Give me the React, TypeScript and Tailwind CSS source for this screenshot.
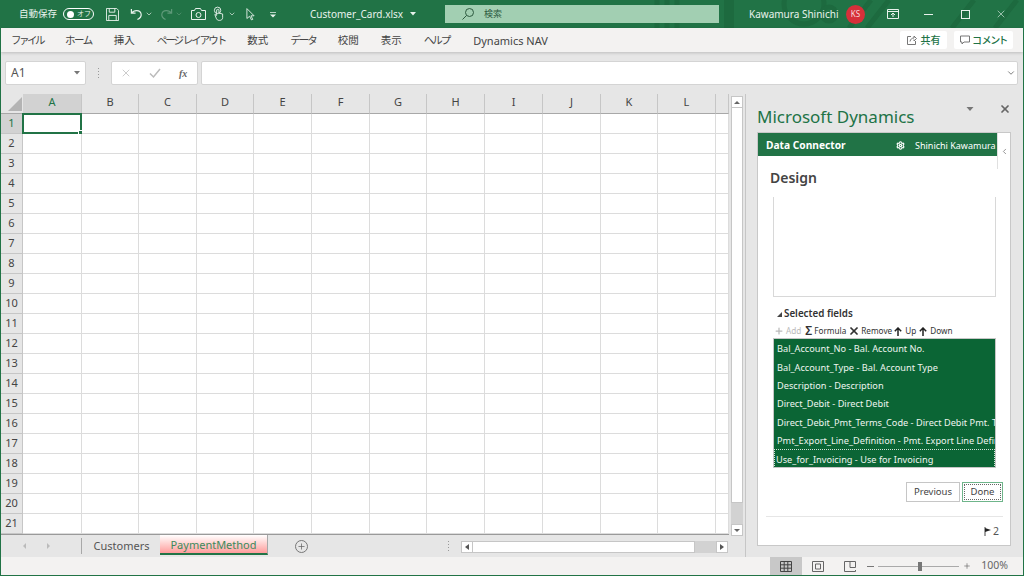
import { ChevronDown, ChevronLeft, Plus, Settings, X } from 'lucide-react';

const sansJa = "font-['Noto_Sans','Noto_Sans_CJK_JP',sans-serif]";

const ribbonTabs = [
    { label: 'ファイル', cls: 'tracking-[-2.5px]' },
    { label: 'ホーム', cls: 'tracking-[-1.5px]' },
    { label: '挿入', cls: '' },
    { label: 'ページ レイアウト', cls: 'tracking-[-2px]' },
    { label: '数式', cls: '' },
    { label: 'データ', cls: 'tracking-[-2px]' },
    { label: '校閲', cls: '' },
    { label: '表示', cls: '' },
    { label: 'ヘルプ', cls: 'tracking-[-2px]' },
    { label: 'Dynamics NAV', cls: 'ml-[2px] text-[11px]' },
];
const columns = ['A', 'B', 'C', 'D', 'E', 'F', 'G', 'H', 'I', 'J', 'K', 'L', ''];
const rows = Array.from({ length: 21 }, (_, i) => i + 1);
const fields = [
    'Bal_Account_No - Bal. Account No.',
    'Bal_Account_Type - Bal. Account Type',
    'Description - Description',
    'Direct_Debit - Direct Debit',
    'Direct_Debit_Pmt_Terms_Code - Direct Debit Pmt. Terms Code',
    'Pmt_Export_Line_Definition - Pmt. Export Line Definition',
    'Use_for_Invoicing - Use for Invoicing',
];

const gridCols = 'grid grid-cols-[22px_59px_57px_58px_57px_58px_58px_57px_58px_58px_58px_57px_58px_13px_2px]';

function TitleBar() {
    return (
        <div className="relative flex h-[28px] shrink-0 items-center overflow-hidden bg-[#217346] text-[#e8f2ec]">
            {/* circuit watermark */}
            <svg className="absolute right-0 top-0" width="384" height="28" fill="none" stroke="#1d6a3f" strokeWidth="5">
                <path d="M18 0v28M28 0v28M38 0v28" />
                <path d="M90 0v28" strokeWidth="10" />
                <circle cx="165" cy="4" r="20" />
                <circle cx="190" cy="14" r="7" />
                <path d="M232 0l-22 28M250 0l-22 28M335 0l-22 28M378 0l-22 28" />
            </svg>
            <span className="relative ml-[18px] w-[40px] text-[9.5px] whitespace-nowrap">自動保存</span>
            <div className="relative ml-[4px] flex h-[12px] w-[31px] items-center rounded-full border border-white px-[3px]">
                <span className="h-[7px] w-[7px] shrink-0 rounded-full bg-white" />
                <span className="ml-[3px] text-[7px] whitespace-nowrap">オフ</span>
            </div>
            <svg className="relative ml-[12px] shrink-0" width="13" height="13" viewBox="0 0 14 14" fill="none" stroke="#e8f2ec">
                <path d="M.5.5h11l2 2v11H.5zM3.5.5v4h6v-4M3 13.5V8h8v5.5" />
            </svg>
            <svg className="relative ml-[11px] shrink-0" width="13" height="14" viewBox="0 0 14 14" fill="none" stroke="#e8f2ec" strokeWidth="1.3">
                <path d="M1.500 1.500v4.500h4.500M2 6c2-3.500 9-4 10 1 .5 3-2 5-4 6" />
            </svg>
            <ChevronDown className="relative ml-[2px] shrink-0" size={8} />
            <svg className="relative ml-[7px] shrink-0 opacity-30" width="13" height="14" viewBox="0 0 14 14" fill="none" stroke="#e8f2ec" strokeWidth="1.3">
                <path d="M12.500 1.500v4.500H8M12 6c-2-3.500-9-4-10 1-.5 3 2 5 4 6" />
            </svg>
            <ChevronDown className="relative ml-[2px] shrink-0 opacity-30" size={8} />
            <svg className="relative ml-[8px] shrink-0" width="15" height="14" viewBox="0 0 15 14" fill="none" stroke="#e8f2ec">
                <path d="M.5 3.500h3l1-2h5l1 2h4v9H.5z" />
                <circle cx="7.500" cy="8" r="2.500" />
            </svg>
            <svg className="relative ml-[7px] shrink-0" width="11" height="16" viewBox="0 0 12 16" fill="none" stroke="#e8f2ec">
                <circle cx="5" cy="4" r="3.500" />
                <path d="M4 3.500v6l-2 -1 1.500 4c.5 1.500 1.500 2.500 3.500 2.500s3.500-1 3.500-3V8l-4-1V3.500c0-1-2-1-2 0z" />
            </svg>
            <ChevronDown className="relative ml-[4px] shrink-0" size={8} />
            <svg className="relative ml-[10px] shrink-0" width="9" height="14" viewBox="0 0 10 14" fill="none" stroke="#e8f2ec">
                <path d="M1 1l8 8H5.500l2 4-1.500.5-2-4L1 12z" />
            </svg>
            <svg className="relative ml-[15px] shrink-0" width="6" height="7" viewBox="0 0 8 8" fill="#e8f2ec">
                <path d="M0 1h8v1H0zM0 4h8L4 8z" />
            </svg>
            <span className="relative ml-[34px] w-[94px] text-[10px] whitespace-nowrap">Customer_Card.xlsx</span>
            <svg className="relative ml-[6px] shrink-0" width="6" height="4" viewBox="0 0 6 4" fill="#e8f2ec">
                <path d="M0 0h6L3 3.500z" />
            </svg>
            <div className="relative ml-[29px] flex h-[18px] w-[274px] shrink-0 items-center bg-[#a2cfb2] pl-[16px] text-[#2d5a3f]">
                <svg width="14" height="14" viewBox="0 0 14 14" fill="none" stroke="#2d5a3f">
                    <circle cx="8.500" cy="5.500" r="4" />
                    <path d="M5.500 8.500L1.500 12.500" />
                </svg>
                <span className="ml-[9px] text-[9px]">検索</span>
            </div>
            <span className="relative ml-[30px] w-[89px] text-[10px] whitespace-nowrap">Kawamura Shinichi</span>
            <div className="relative ml-[8px] flex h-[19px] w-[19px] shrink-0 items-center justify-center rounded-full bg-[#d6303a] text-[8px] text-[#f6dcdc]">
                KS
            </div>
            <svg className="relative ml-[22px] shrink-0" width="12" height="10" viewBox="0 0 12 10" fill="none" stroke="#e8f2ec">
                <path d="M.5.500h11v9H.5zM.5 2.500h11M6 8V4M4 6l2-2 2 2" />
            </svg>
            <div className="relative ml-[25px] h-px w-[9px] shrink-0 bg-[#e8f2ec]" />
            <div className="relative ml-[28px] h-[9px] w-[9px] shrink-0 border border-[#e8f2ec]" />
            <X className="relative ml-[25px] shrink-0" size={12} strokeWidth={1.2} />
        </div>
    );
}

function RibbonTabs() {
    return (
        <div className="relative z-10 flex h-[24px] shrink-0 items-center bg-[#f3f2f1] pl-[10px] pr-[10px] text-[10.5px] text-[#444] shadow-[0_1px_3px_rgba(0,0,0,0.18)]">
            <div className="mt-[2px] flex items-center gap-[22px]">
                {ribbonTabs.map((t) => (
                    <span key={t.label} className={`whitespace-nowrap ${t.cls}`}>{t.label}</span>
                ))}
            </div>
            <div className="ml-auto flex items-center gap-[7px] text-[10px] font-medium text-[#217346] [font-feature-settings:'palt']">
                <div className="flex h-[18px] w-[47px] items-center justify-center gap-[4px] rounded-[2px] bg-white">
                    <svg width="10" height="10" viewBox="0 0 10 10" fill="none" stroke="#777">
                        <path d="M4 1.500H.5v8h8V6M3 6.500C3.500 4 5 3 7 3V1l2.500 2.500L7 6V4.500" />
                    </svg>
                    共有
                </div>
                <div className="flex h-[18px] w-[59px] items-center justify-center gap-[3px] rounded-[2px] bg-white">
                    <svg width="10" height="10" viewBox="0 0 10 10" fill="none" stroke="#777">
                        <path d="M.5 1h9v6H4L2 9V7H.5z" />
                    </svg>
                    コメント
                </div>
            </div>
        </div>
    );
}

function FormulaBar() {
    return (
        <div className="flex h-[42px] shrink-0 items-start bg-[#e6e6e6] pl-[4px] pr-[5px] pt-[9px]">
            <div className="flex h-[24px] w-[81px] items-center justify-between rounded-[2px] border border-[#d4d4d4] bg-white pl-[5px] pr-[5px] text-[12px] text-[#555]">
                <span>A1</span>
                <svg width="6" height="4" viewBox="0 0 6 4" fill="#777">
                    <path d="M0 0h6L3 3.500z" />
                </svg>
            </div>
            <div className="flex h-[24px] w-[25px] flex-col items-center justify-center gap-[2px]">
                <span className="h-px w-px bg-[#999]" />
                <span className="h-px w-px bg-[#999]" />
                <span className="h-px w-px bg-[#999]" />
                <span className="h-px w-px bg-[#999]" />
            </div>
            <div className="flex h-[24px] w-[87px] items-center rounded-[2px] border border-[#d4d4d4] bg-white text-[#bbb]">
                <X className="ml-[8px]" size={12} strokeWidth={1.5} />
                <svg className="ml-[17px]" width="12" height="12" viewBox="0 0 12 12" fill="none" stroke="#bbb" strokeWidth="1.500">
                    <path d="M1 6.500l3.500 3.500L11 2" />
                </svg>
                <span className="ml-[18px] font-['Liberation_Serif',serif] text-[10px] italic font-bold text-[#666]">fx</span>
            </div>
            <div className="ml-[3px] flex h-[24px] flex-1 items-center justify-end rounded-[2px] border border-[#d4d4d4] bg-white pr-[1px] text-[#666]">
                <ChevronDown size={10} strokeWidth={2} />
            </div>
        </div>
    );
}

function Sheet() {
    return (
        <div className="flex min-h-0 flex-1 flex-col">
            <div className="flex h-[441px] shrink-0">
                <div className="w-[730px] shrink-0 bg-[#e6e6e6]">
                    <div className={`${gridCols} h-[20px] bg-[#e6e6e6] text-[11px] text-[#444]`}>
                        <div className="relative border-b border-b-[#a8a8a8]">
                            <div className="absolute bottom-[2px] right-[1px] h-0 w-0 border-b-[14px] border-l-[14px] border-b-[#b4b4b4] border-l-transparent" />
                        </div>
                        {columns.map((c, i) => (
                            <div
                                key={c + i}
                                className={`flex items-center justify-center border-b border-r border-b-[#a8a8a8] border-r-[#c6c6c6] pb-[2px] ${i === 0 ? 'bg-[#d2d2d2] text-[#217346]' : ''}`}
                            >
                                {c}
                            </div>
                        ))}
                        <div />
                    </div>
                    {rows.map((r) => (
                        <div key={r} className={`${gridCols} h-[20px] text-[11px]`}>
                            <div className={`flex items-center justify-center border-b border-r border-[#c6c6c6] ${r === 1 ? 'bg-[#d2d2d2] text-[#217346]' : 'bg-[#e6e6e6] text-[#444]'}`}>
                                {r}
                            </div>
                            {columns.map((c, i) => (
                                <div key={c + i} className="relative border-b border-r border-[#dcdcdc] bg-white">
                                    {r === 1 && i === 0 && (
                                        <div className="absolute -left-px -top-px h-[21px] w-[60px] border-2 border-[#217346]">
                                            <div className="absolute -bottom-[3px] -right-[3px] h-[5px] w-[5px] border border-white bg-[#217346]" />
                                        </div>
                                    )}
                                </div>
                            ))}
                            <div />
                        </div>
                    ))}
                    <div className="mr-[2px] h-px bg-[#9a9a9a]" />
                </div>
                <div className="flex w-[14px] shrink-0 flex-col bg-[#e6e6e6] pt-[2px]">
                    <div className="flex h-[12px] w-[12px] items-center justify-center border border-[#c6c6c6] bg-white">
                        <span className="h-0 w-0 border-x-[3px] border-b-[3px] border-x-transparent border-b-[#666]" />
                    </div>
                    <div className="h-[395px] w-[12px] border-x border-b border-[#c6c6c6] bg-white" />
                    <div className="w-[12px] flex-1 bg-[#d2d2d2]" />
                    <div className="relative mb-[-1px] flex h-[12px] w-[12px] items-center justify-center border border-[#c6c6c6] bg-white">
                        <span className="h-0 w-0 border-x-[3px] border-t-[3px] border-x-transparent border-t-[#666]" />
                    </div>
                </div>
            </div>
            <div className="flex h-[22px] shrink-0 items-start bg-[#e6e6e6] text-[11px] text-[#555]">
                <div className="mt-[3px] flex h-[16px] w-[81px] shrink-0 items-center border-r border-r-[#a8a8a8] pl-[22px]">
                    <span className="h-0 w-0 border-y-[3px] border-r-[3px] border-y-transparent border-r-[#bbb]" />
                    <span className="ml-[21px] h-0 w-0 border-y-[3px] border-l-[3px] border-y-transparent border-l-[#bbb]" />
                </div>
                <div className="flex h-[20px] w-[78px] shrink-0 items-center justify-center pl-[1px] pt-[2px]">Customers</div>
                <div className="flex h-[20px] w-[108px] shrink-0 items-center justify-center border-b-2 border-r border-b-[#217346] border-r-[#a8a8a8] bg-gradient-to-b from-white to-[#ff9c9c] pt-[2px] text-[#3d8a5c]">
                    PaymentMethod
                </div>
                <div className="ml-[27px] mt-[5px] flex h-[13px] w-[13px] items-center justify-center rounded-full border border-[#777] text-[#666]">
                    <Plus size={9} strokeWidth={2} />
                </div>
                <div className="ml-[140px] mt-[6px] flex flex-col gap-[2px]">
                    <span className="h-px w-px bg-[#999]" />
                    <span className="h-px w-px bg-[#999]" />
                    <span className="h-px w-px bg-[#999]" />
                    <span className="h-px w-px bg-[#999]" />
                </div>
                <div className="ml-[12px] mt-[6px] flex h-[12px] w-[267px] bg-[#d2d2d2]">
                    <div className="flex h-[12px] w-[12px] items-center justify-center border border-[#c6c6c6] bg-white">
                        <span className="h-0 w-0 border-y-[3px] border-r-[4px] border-y-transparent border-r-[#555]" />
                    </div>
                    <div className="h-[12px] w-[222px] border-y border-r border-[#c6c6c6] bg-white" />
                    <div className="ml-auto flex h-[12px] w-[12px] items-center justify-center border border-[#c6c6c6] bg-white">
                        <span className="h-0 w-0 border-y-[3px] border-l-[4px] border-y-transparent border-l-[#555]" />
                    </div>
                </div>
            </div>
        </div>
    );
}

function TaskPane() {
    return (
        <div className="flex w-[278px] shrink-0 flex-col border-l border-l-[#c6c6c6] bg-[#e6e6e6] pl-[11px] pr-[12px]">
            <div className="flex h-[38px] shrink-0 items-center">
                <span className="mt-[6px] w-[157px] shrink-0 text-[17px] leading-none whitespace-nowrap text-[#217346]">Microsoft Dynamics</span>
                <svg className="ml-[52px] mb-[8px] shrink-0" width="8" height="5" viewBox="0 0 7 5" fill="#777">
                    <path d="M0 0h7L3.500 4z" />
                </svg>
                <X className="ml-[25px] mb-[8px] shrink-0 text-[#666]" size={12} strokeWidth={3.5} />
            </div>
            <div className="relative flex h-[414px] shrink-0 flex-col border border-[#c8c8c8] bg-white">
                <div className="flex h-[23px] w-[240px] shrink-0 items-center bg-[#217346] pt-[2px] text-white">
                    <span className="ml-[8px] w-[79px] shrink-0 text-[10.2px] font-bold whitespace-nowrap">Data Connector</span>
                    <Settings className="ml-[51px] shrink-0" size={9} strokeWidth={3} />
                    <span className="ml-[10px] text-[9px] whitespace-nowrap">Shinichi Kawamura</span>
                </div>
                {/* collapse handle */}
                <div className="absolute right-0 top-0 flex h-[36px] w-[13px] items-center justify-center border-l border-l-[#e0e0e0] bg-white text-[#777]">
                    <ChevronLeft size={9} strokeWidth={2} />
                </div>
                <h2 className="ml-[12px] mt-[12px] h-[29px] text-[14px] leading-[19px] font-semibold text-[#444]">Design</h2>
                <div className="ml-[15px] h-[100px] w-[223px] shrink-0 border-x border-b border-[#d8d8d8]" />
                <div className="ml-[19px] mt-[11px] flex items-center gap-[2px] text-[9.8px] leading-[12px] font-semibold text-[#333]">
                    <span className="h-0 w-0 border-b-[5px] border-l-[5px] border-b-[#444] border-l-transparent" />
                    Selected fields
                </div>
                <div className="ml-[16px] mt-[5px] flex h-[12px] items-center whitespace-nowrap text-[8.2px] text-[#333]">
                    <Plus className="shrink-0 text-[#bbb]" size={10} strokeWidth={3} />
                    <span className="ml-[2px] text-[#bbb]">Add</span>
                    <span className="ml-[4px] text-[12px] font-semibold leading-none">Σ</span>
                    <span className="ml-[2px]">Formula</span>
                    <X className="ml-[2px] shrink-0" size={12} strokeWidth={3.5} />
                    <span className="ml-[1px]">Remove</span>
                    <svg className="ml-[2px] shrink-0" width="8" height="9" viewBox="0 0 8 9" fill="none" stroke="#222" strokeWidth="1.500">
                        <path d="M4 9V1M.8 4.200L4 1l3.200 3.200" />
                    </svg>
                    <span className="ml-[3px]">Up</span>
                    <svg className="ml-[3px] shrink-0" width="8" height="9" viewBox="0 0 8 9" fill="none" stroke="#222" strokeWidth="1.500">
                        <path d="M4 9V1M.8 4.200L4 1l3.200 3.200" />
                    </svg>
                    <span className="ml-[3px]">Down</span>
                </div>
                <div className="ml-[15px] mt-[1px] h-[130px] w-[223px] shrink-0 overflow-hidden border border-[#c6c6c6] bg-[#0b6535] text-[9.2px] text-[#eef5f0]">
                    {fields.map((f, i) => (
                        <div
                            key={f}
                            className={`flex h-[18.400px] items-center pt-[2px] whitespace-nowrap ${i === 6 ? 'border border-dotted border-[#cfe3d6] pl-[1px]' : 'pl-[3px]'}`}
                        >
                            {f}
                        </div>
                    ))}
                </div>
                <div className="mr-[7px] mt-[14px] flex justify-end gap-[2px] text-[9.5px] text-[#444]">
                    <div className="flex h-[20px] w-[54px] items-center justify-center border border-[#c6c6c6]">Previous</div>
                    <div className="flex h-[20px] w-[41px] items-center justify-center border border-[#6fb58b] p-px">
                        <div className="flex h-full w-full items-center justify-center border border-dotted border-[#666]">Done</div>
                    </div>
                </div>
                <div className="ml-[8px] mr-[7px] mt-[14px] h-px bg-[#e6e6e6]" />
                <div className="mr-[11px] mt-[7px] flex items-center justify-end gap-[2px] text-[10.5px] text-[#555]">
                    <svg width="7" height="9" viewBox="0 0 7 9">
                        <path d="M1 0v9" stroke="#444" />
                        <path d="M1 1l6 2-6 2z" fill="#222" />
                    </svg>
                    2
                </div>
            </div>
        </div>
    );
}

function StatusBar() {
    return (
        <div className="flex h-[18px] shrink-0 items-center bg-[#f3f2f1] text-[#666]">
            <div className="ml-auto flex h-[18px] w-[32px] items-center justify-center bg-[#c8c8c8]">
                <svg width="12" height="11" viewBox="0 0 12 11" fill="none" stroke="#444">
                    <path d="M.5.500h11v10H.5zM.5 3.800h11M.5 7.200h11M4.200.500v10M7.800.500v10" />
                </svg>
            </div>
            <div className="ml-[9px] flex w-[14px] justify-center">
                <svg width="12" height="11" viewBox="0 0 12 11" fill="none" stroke="#666">
                    <path d="M.5.500h11v10H.5zM3.500 3h5v5h-5z" />
                </svg>
            </div>
            <div className="ml-[18px] flex w-[14px] justify-center">
                <svg width="12" height="11" viewBox="0 0 12 11" fill="none" stroke="#666">
                    <path d="M.5 10.500V.5h11v6H6M6 .500v6M.5 10.500h11V9" />
                </svg>
            </div>
            <div className="ml-[10px] h-px w-[7px] bg-[#777]" />
            <div className="relative ml-[4px] h-px w-[81px] bg-[#aaa]">
                <div className="absolute -top-[4px] left-[40px] h-[9px] w-[4px] bg-[#777]" />
            </div>
            <Plus className="ml-[4px] shrink-0" size={8} strokeWidth={2} />
            <span className="ml-[10px] mr-[15px] text-[10.5px]">100%</span>
        </div>
    );
}

export default function App() {
    return (
        <div className={`flex h-[576px] w-[1024px] flex-col overflow-hidden border-x border-b border-[#217346] ${sansJa}`}>
            <TitleBar />
            <RibbonTabs />
            <FormulaBar />
            <div className="flex min-h-0 flex-1">
                <Sheet />
                <TaskPane />
            </div>
            <StatusBar />
        </div>
    );
}
